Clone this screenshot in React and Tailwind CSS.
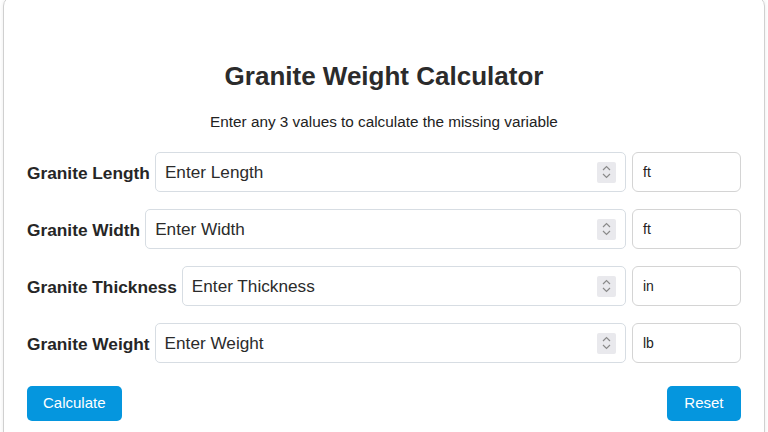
import { useState } from "react";

const fields = [
  { key: "length", label: "Granite Length", placeholder: "Enter Length", unit: "ft" },
  { key: "width", label: "Granite Width", placeholder: "Enter Width", unit: "ft" },
  { key: "thickness", label: "Granite Thickness", placeholder: "Enter Thickness", unit: "in" },
  { key: "weight", label: "Granite Weight", placeholder: "Enter Weight", unit: "lb" },
];

function Spinner() {
  return (
    <div className="w-[19px] h-[21px] bg-[#e9e9ed] rounded-[2px] flex flex-col items-center justify-center shrink-0">
      <svg width="9" height="6" viewBox="0 0 9 6" fill="none">
        <path d="M1 5 L4.5 1.5 L8 5" stroke="#8a8a8a" strokeWidth="1.2" />
      </svg>
      <svg width="9" height="6" viewBox="0 0 9 6" fill="none" className="mt-[2px]">
        <path d="M1 1 L4.5 4.5 L8 1" stroke="#8a8a8a" strokeWidth="1.2" />
      </svg>
    </div>
  );
}

export default function App() {
  const [values, setValues] = useState({});

  return (
    <div className="min-h-screen bg-white px-[3px] font-['Liberation_Sans',Arial,sans-serif] text-[#333]">
      <div className="-mt-[4px] border border-[#d0d0d0] rounded-[10px] shadow-[0_0_4px_rgba(0,0,0,0.08)] pl-[23px] pr-[23px] pt-[64px] pb-[24px]">
        <h1 className="text-center text-[26px] font-bold leading-[30px] text-[#2b2b2b]">
          Granite Weight Calculator
        </h1>
        <p className="text-center text-[15.3px] mt-[22px] leading-[18px] text-[#222]">
          Enter any 3 values to calculate the missing variable
        </p>

        <div className="mt-[21px] flex flex-col gap-[17px]">
          {fields.map((f) => (
            <div key={f.key} className="flex items-center">
              <label className="text-[17.3px] font-bold text-[#262626] whitespace-nowrap pt-[3px]">{f.label}</label>
              <div className="ml-[5px] flex-1 h-[40px] border border-[#d7dde3] rounded-[5px] flex items-center pl-[9px] pr-[9px]">
                <input
                  type="text"
                  value={values[f.key] || ""}
                  onChange={(e) => setValues({ ...values, [f.key]: e.target.value })}
                  placeholder={f.placeholder}
                  className="flex-1 min-w-0 outline-none text-[17.2px] text-[#2b2b2b] placeholder:text-[#2b2b2b] bg-transparent pt-[2px]"
                />
                <Spinner />
              </div>
              <div className="ml-[6px] w-[109px] h-[40px] border border-[#d4d4d4] rounded-[6px] flex items-center pl-[10px] text-[14px] text-[#222]">
                {f.unit}
              </div>
            </div>
          ))}
        </div>

        <div className="mt-[23px] flex justify-between">
          <button className="bg-[#0596de] text-white text-[15px] h-[35px] px-[16px] rounded-[5px]">
            Calculate
          </button>
          <button className="bg-[#0596de] text-white text-[15px] h-[35px] px-[17.5px] rounded-[5px]">
            Reset
          </button>
        </div>
      </div>
    </div>
  );
}
